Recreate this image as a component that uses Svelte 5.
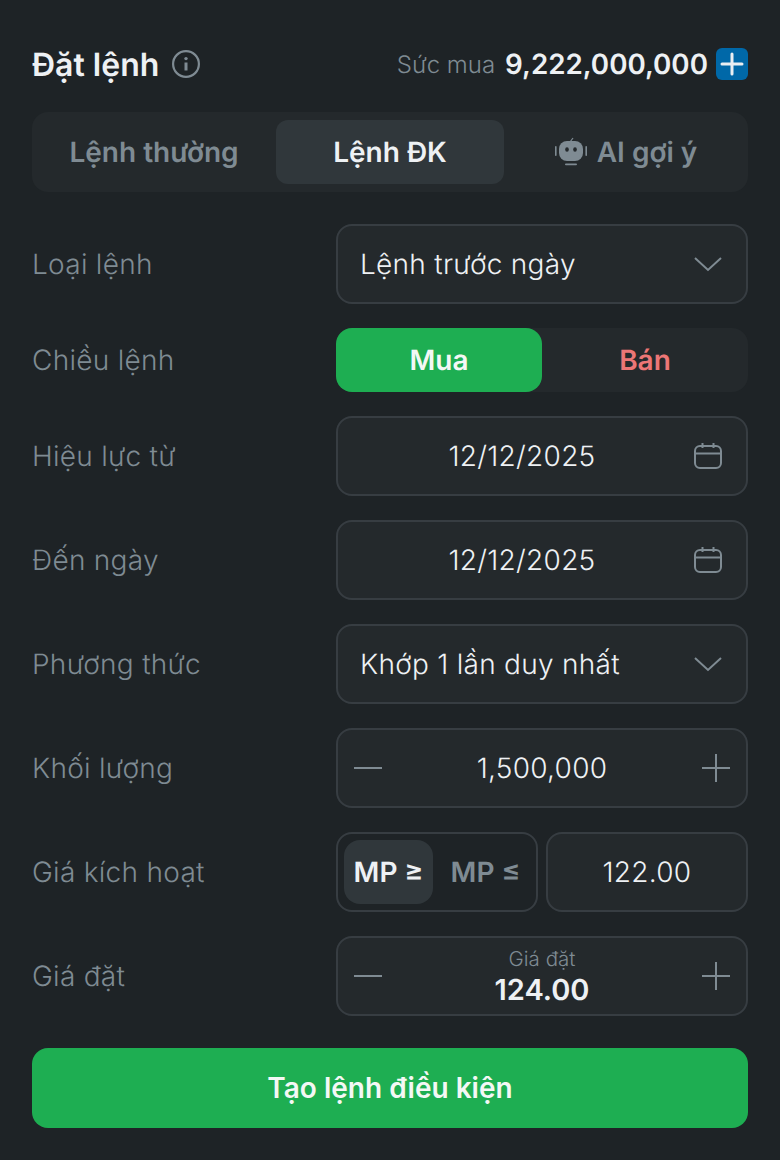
<script>
  let tabs = ['Lệnh thường', 'Lệnh ĐK', 'AI gợi ý']
</script>

<div class="panel">
  <div class="head">
    <div class="title">
      <span>Đặt lệnh</span>
      <svg width="28" height="28" viewBox="0 0 28 28" fill="none" stroke="#7f8b93" stroke-width="2.2">
        <circle cx="14" cy="14" r="12.9" />
        <path d="M14 12.5v8" stroke-width="3" />
        <circle cx="14" cy="8.6" r="1.7" fill="#7f8b93" stroke="none" />
      </svg>
    </div>
    <div class="power">
      <span class="power-label">Sức mua</span>
      <span class="power-value">9,222,000,000</span>
      <span class="add">
        <svg width="32" height="32" viewBox="0 0 32 32" stroke="#e9eef2" stroke-width="3" stroke-linecap="round">
          <path d="M16 6v20M6 16h20" />
        </svg>
      </span>
    </div>
  </div>

  <div class="tabs">
    {#each tabs as tab, i}
      <div class="tab" class:active={i === 1}>
        {#if i === 2}
          <svg width="32" height="30" viewBox="0 0 32 30" fill="#7f8b93">
            <path d="M15 5 18 1" stroke="#7f8b93" stroke-width="1.2" fill="none" />
            <rect x="4" y="4" width="24" height="20" rx="8" />
            <rect x="0" y="9" width="1.600" height="10" rx=".8" />
            <rect x="30.400" y="9" width="1.600" height="10" rx=".8" />
            <rect x="10" y="26.400" width="12" height="1.800" rx=".9" />
            <ellipse cx="12" cy="12.500" rx="1.800" ry="2.200" fill="#24292c" />
            <ellipse cx="20" cy="12.500" rx="1.800" ry="2.200" fill="#24292c" />
          </svg>
        {/if}
        {tab}
      </div>
    {/each}
  </div>

  <div class="form">
    <div class="row">
      <div class="label">Loại lệnh</div>
      <div class="field select">
        <span>Lệnh trước ngày</span>
        <svg class="chev" width="28" height="16" viewBox="0 0 28 16" fill="none" stroke="#7f8b93" stroke-width="2">
          <path d="M1 2 14 14 27 2" />
        </svg>
      </div>
    </div>

    <div class="row side-row">
      <div class="label">Chiều lệnh</div>
      <div class="side">
        <div class="buy">Mua</div>
        <div class="sell">Bán</div>
      </div>
    </div>

    {#each ['Hiệu lực từ', 'Đến ngày'] as label}
      <div class="row">
        <div class="label">{label}</div>
        <div class="field date">
          <span class="date-value">12/12/2025</span>
          <svg class="cal" width="28" height="28" viewBox="0 0 28 28" fill="none" stroke="#7f8b93" stroke-width="2">
            <rect x="1" y="4" width="26" height="22" rx="5" />
            <path d="M1 11.5h26M8.500 1v5M19.500 1v5" />
          </svg>
        </div>
      </div>
    {/each}

    <div class="row">
      <div class="label">Phương thức</div>
      <div class="field select">
        <span>Khớp 1 lần duy nhất</span>
        <svg class="chev" width="28" height="16" viewBox="0 0 28 16" fill="none" stroke="#7f8b93" stroke-width="2">
          <path d="M1 2 14 14 27 2" />
        </svg>
      </div>
    </div>

    <div class="row">
      <div class="label">Khối lượng</div>
      <div class="field stepper">
        <svg width="28" height="28" viewBox="0 0 28 28" stroke="#7f8b93" stroke-width="2"><path d="M0 14h28" /></svg>
        <span>1,500,000</span>
        <svg width="28" height="28" viewBox="0 0 28 28" stroke="#7f8b93" stroke-width="2"><path d="M0 14h28M14 0v28" /></svg>
      </div>
    </div>

    <div class="row">
      <div class="label">Giá kích hoạt</div>
      <div class="trigger">
        <div class="mp-box">
          <div class="mp active">MP ≥</div>
          <div class="mp second">MP ≤</div>
        </div>
        <div class="field price">122.00</div>
      </div>
    </div>

    <div class="row">
      <div class="label">Giá đặt</div>
      <div class="field stepper">
        <svg width="28" height="28" viewBox="0 0 28 28" stroke="#7f8b93" stroke-width="2"><path d="M0 14h28" /></svg>
        <div class="stack">
          <div class="stack-label">Giá đặt</div>
          <div class="stack-value">124.00</div>
        </div>
        <svg width="28" height="28" viewBox="0 0 28 28" stroke="#7f8b93" stroke-width="2"><path d="M0 14h28M14 0v28" /></svg>
      </div>
    </div>
  </div>

  <button class="submit">Tạo lệnh điều kiện</button>
</div>

<style>
  :global(body) {
    background: #1e2326;
    font-family: Inter, "Noto Sans", sans-serif;
    font-weight: 350;
    text-rendering: geometricPrecision;
  }

  .panel {
    width: 780px;
    height: 1160px;
    box-sizing: border-box;
    padding: 40px 32px 32px;
    color: #eef1f4;
  }

  .head {
    height: 48px;
    display: flex;
    align-items: center;
    justify-content: space-between;
    margin-bottom: 24px;
  }

  .title {
    display: flex;
    align-items: center;
    gap: 13px;
    font-size: 32px;
    font-weight: 600;
  }

  .power {
    display: flex;
    align-items: center;
  }

  .power-label {
    font-size: 24px;
    color: #7f8b93;
    margin-right: 10px;
  }

  .power-value {
    font-size: 27.75px;
    font-weight: 600;
    margin-right: 8px;
  }

  .add {
    width: 32px;
    height: 32px;
    border-radius: 6px;
    background: #0068a8;
    display: flex;
  }

  .tabs {
    height: 80px;
    box-sizing: border-box;
    padding: 8px;
    border-radius: 16px;
    background: #24292c;
    display: grid;
    grid-template-columns: repeat(3, 228px);
    gap: 8px;
    margin-bottom: 32px;
  }

  .tab {
    display: flex;
    align-items: center;
    justify-content: center;
    gap: 10px;
    border-radius: 12px;
    font-size: 28px;
    font-weight: 600;
    color: #7f8b93;
  }

  .tab.active {
    background: #30373b;
    color: #eef1f4;
  }

  .form {
    display: flex;
    flex-direction: column;
    gap: 24px;
    margin-bottom: 32px;
  }

  .row {
    height: 80px;
    display: grid;
    grid-template-columns: 304px 412px;
    align-items: center;
  }

  .side-row {
    height: 64px;
  }

  .label {
    font-size: 28px;
    letter-spacing: .28px;
    color: #7f8b93;
  }

  .field {
    height: 80px;
    box-sizing: border-box;
    border: 2px solid #373d42;
    border-radius: 16px;
    background: #24292c;
    font-size: 28px;
    letter-spacing: .28px;
    display: flex;
    align-items: center;
  }

  .select {
    justify-content: space-between;
    padding: 0 24px 0 22px;
  }

  .date {
    position: relative;
    justify-content: center;
    padding-right: 40px;
  }

  .cal {
    position: absolute;
    right: 24px;
    top: 24px;
  }

  .stepper {
    justify-content: space-between;
    padding: 0 16px;
    text-align: center;
  }

  .stack-label {
    font-size: 20.5px;
    line-height: 28px;
    letter-spacing: 0;
    color: #7f8b93;
  }

  .stack-value {
    font-size: 29px;
    line-height: 34px;
    letter-spacing: 0;
    font-weight: 600;
  }

  .side {
    height: 64px;
    border-radius: 16px;
    background: #24292c;
    display: grid;
    grid-template-columns: 1fr 1fr;
    font-size: 28px;
    font-weight: 600;
  }

  .buy,
  .sell {
    display: flex;
    align-items: center;
    justify-content: center;
    border-radius: 16px;
  }

  .buy {
    background: #1eae52;
    color: #f4f8f5;
  }

  .sell {
    color: #ec7676;
  }

  .trigger {
    display: grid;
    grid-template-columns: 202px 202px;
    gap: 8px;
  }

  .mp-box {
    height: 80px;
    box-sizing: border-box;
    border: 2px solid #373d42;
    border-radius: 16px;
    padding: 6px;
    display: grid;
    grid-template-columns: 89px 1fr;
  }

  .mp {
    display: flex;
    align-items: center;
    justify-content: center;
    border-radius: 16px;
    font-size: 28px;
    font-weight: 600;
    color: #7f8b93;
  }

  .mp.second {
    padding-left: 8px;
  }

  .mp.active {
    background: #30373b;
    color: #eef1f4;
  }

  .price {
    justify-content: center;
  }

  .submit {
    display: block;
    width: 716px;
    height: 80px;
    border: 0;
    border-radius: 16px;
    background: #1eae52;
    color: #f4f8f5;
    font-family: inherit;
    font-size: 28px;
    font-weight: 600;
  }
</style>
